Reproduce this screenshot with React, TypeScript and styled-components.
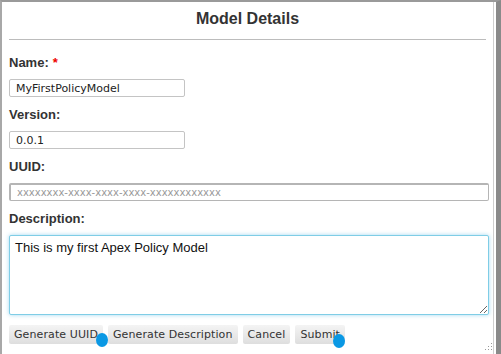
import React from 'react';
import styled, { createGlobalStyle } from 'styled-components';

const Global = createGlobalStyle`
  html, body {
    margin: 0;
    padding: 0;
    background: #fff;
  }
`;

const Dialog = styled.div`
  position: relative;
  box-sizing: border-box;
  width: 501px;
  height: 354px;
  background: #fff;
  border-top: 2px solid #9a9a9a;
  border-left: 2px solid #a8a8a8;
  border-right: 5px solid #8a8a8a;
  box-shadow: inset -2px 0 0 #fff, inset -3px 0 0 #cfcfcf;
  padding: 0 10px 0 7px;
  font-family: 'Liberation Sans', Arial, sans-serif;
  display: flex;
  flex-direction: column;
`;

const Title = styled.h2`
  box-sizing: border-box;
  margin: 0;
  height: 38px;
  line-height: 34px;
  text-align: center;
  font-size: 16px;
  font-weight: bold;
  color: #333;
  border-bottom: 1px solid #bcbcbc;
`;

const Form = styled.div`
  display: flex;
  flex-direction: column;
  align-items: flex-start;
  padding-top: 14px;
`;

const Label = styled.label`
  display: block;
  height: 18px;
  line-height: 18px;
  font-size: 13px;
  font-weight: bold;
  color: #333;
  margin-bottom: 7px;
`;

const Required = styled.span`
  color: #e00;
  margin-left: 4px;
`;

const TextInput = styled.input<{ $wide?: boolean; $strong?: boolean }>`
  display: block;
  box-sizing: border-box;
  width: ${(p) => (p.$wide ? '480px' : '176px')};
  height: 18px;
  margin: 0 0 9px;
  padding: 0 6px;
  border: 1px solid ${(p) => (p.$strong ? '#b5b5b5' : '#c4c4c4')};
  border-width: ${(p) => (p.$strong ? '2px 1px 1px 2px' : '1px')};
  border-radius: 2px;
  font-family: 'DejaVu Sans', Verdana, sans-serif;
  font-size: 11px;
  color: #222;
  outline: none;
  &::placeholder {
    color: #9a9a9a;
    font-size: 10px;
  }
`;

const Area = styled.textarea`
  display: block;
  box-sizing: border-box;
  width: 480px;
  height: 80px;
  margin: 0;
  padding: 4px 5px;
  border: 1px solid #7fcde6;
  border-radius: 2px;
  box-shadow: 0 0 4px rgba(100, 190, 230, 0.6);
  font-family: 'Liberation Sans', Arial, sans-serif;
  font-size: 13px;
  color: #111;
  outline: none;
  resize: both;
`;

const Buttons = styled.div`
  display: flex;
  gap: 5px;
  margin-top: 10px;
`;

const Button = styled.button`
  height: 19px;
  padding: 0 5px;
  border: none;
  border-radius: 2px;
  background: linear-gradient(#f4f4f4, #dedede);
  font-family: 'DejaVu Sans', Verdana, sans-serif;
  font-size: 11px;
  letter-spacing: 0.1px;
  color: #333;
  cursor: pointer;
`;

const Dot = styled.span<{ $x: number; $y: number }>`
  position: absolute;
  left: ${(p) => p.$x}px;
  top: ${(p) => p.$y}px;
  width: 12px;
  height: 14px;
  border-radius: 50%;
  background: #0a98e4;
`;

const Grip = styled.svg`
  position: absolute;
  right: 3px;
  bottom: 3px;
`;

export default function App() {
  return (
    <>
      <Global />
      <Dialog>
        <Title>Model Details</Title>
        <Form>
          <Label>
            Name:<Required>*</Required>
          </Label>
          <TextInput defaultValue="MyFirstPolicyModel" />
          <Label>Version:</Label>
          <TextInput defaultValue="0.0.1" />
          <Label>UUID:</Label>
          <TextInput $wide $strong placeholder="xxxxxxxx-xxxx-xxxx-xxxx-xxxxxxxxxxxx" />
          <Label>Description:</Label>
          <Area defaultValue="This is my first Apex Policy Model" />
          <Buttons>
            <Button>Generate UUID</Button>
            <Button>Generate Description</Button>
            <Button>Cancel</Button>
            <Button>Submit</Button>
          </Buttons>
        </Form>
        <Dot $x={94} $y={331} />
        <Dot $x={331} $y={332} />
        <Grip width="8" height="8" viewBox="0 0 8 8">
          <g fill="#999">
            <rect x="6" y="0" width="1" height="1" />
            <rect x="3" y="3" width="1" height="1" />
            <rect x="6" y="3" width="1" height="1" />
            <rect x="0" y="6" width="1" height="1" />
            <rect x="3" y="6" width="1" height="1" />
            <rect x="6" y="6" width="1" height="1" />
          </g>
        </Grip>
      </Dialog>
    </>
  );
}
